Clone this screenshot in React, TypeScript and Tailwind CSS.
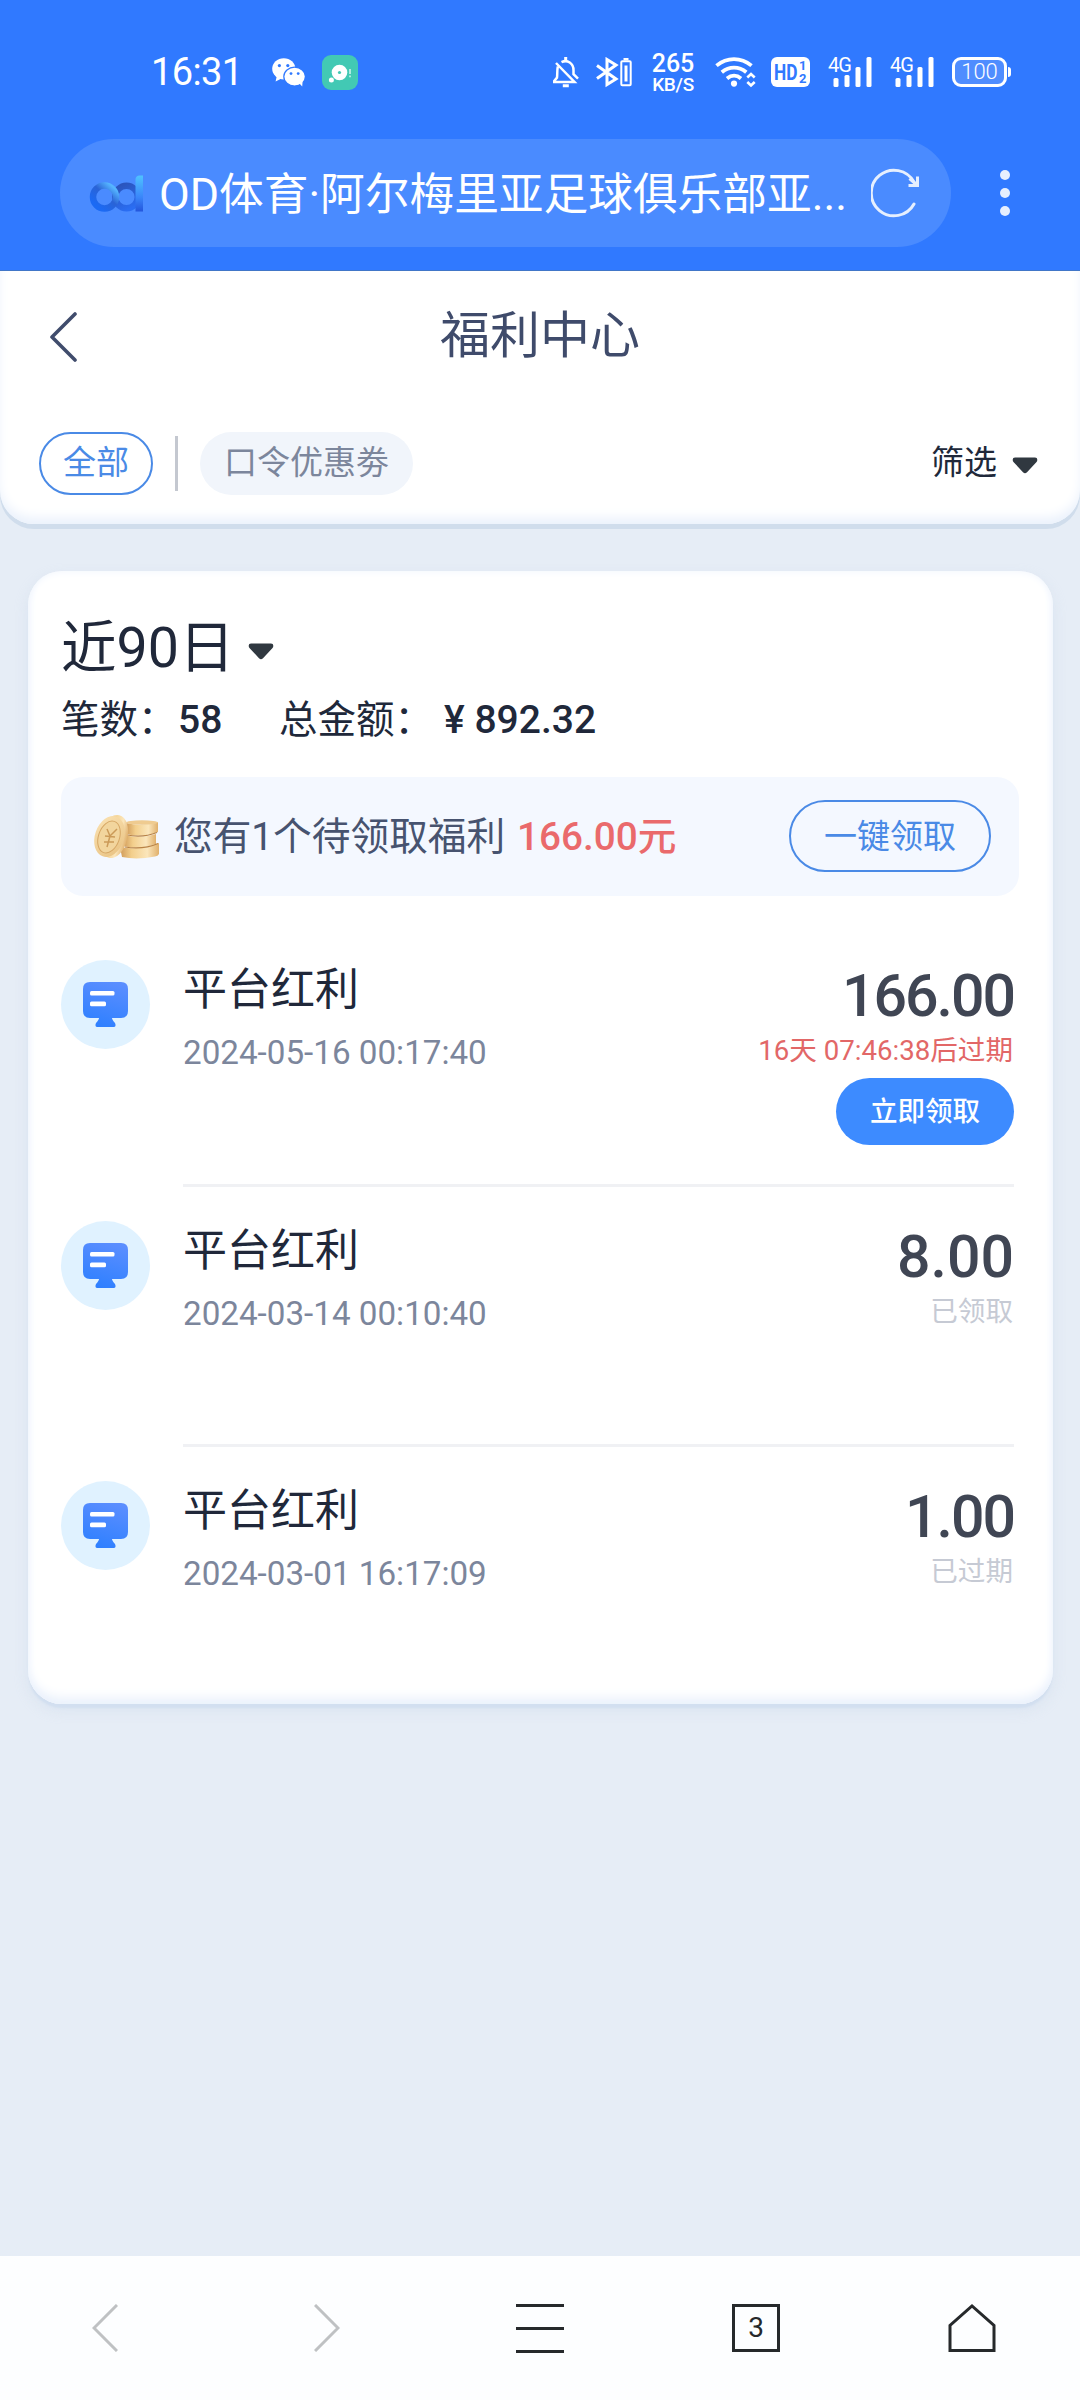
import React from "react";

function StatusBar() {
  return (
    <div className="flex h-[139px] items-start pl-[151px] pt-[53px] text-white">
      <div className="flex h-[38px] w-[121px] items-center whitespace-nowrap text-[38px] font-normal leading-none tracking-[-0.6px]">
        16:31
      </div>
      <svg className="mt-[5px] h-[29px] w-[33px]" viewBox="0 0 33 29" fill="#fff">
        <ellipse cx="11.8" cy="10.8" rx="11.6" ry="10.6" />
        <path d="M5 17 3.6 23.4 10.5 20Z" />
        <ellipse cx="22.6" cy="18.6" rx="10.8" ry="9.4" stroke="#3079ff" strokeWidth="1.2" />
        <path d="M27 25 30.2 28.4 30.6 23Z" />
        <g fill="#3079ff">
          <circle cx="7.4" cy="7.6" r="1.6" />
          <circle cx="15.8" cy="7.6" r="1.6" />
          <circle cx="19" cy="15.6" r="1.4" />
          <circle cx="26.2" cy="15.6" r="1.4" />
        </g>
      </svg>
      <svg className="ml-[17px] mt-[2px] h-[35px] w-[36px]" viewBox="0 0 36 35">
        <rect width="36" height="35" rx="9" fill="#42c9b4" />
        <circle cx="17.5" cy="17.5" r="7.8" fill="#fff" />
        <circle cx="17.5" cy="17.5" r="1.6" fill="#42c9b4" />
        <circle cx="9.4" cy="25" r="2.5" fill="#fff" />
        <path d="M28 14v5M28 20.6v1.6" stroke="#d5f4ee" strokeWidth="1.5" />
      </svg>
      <svg className="ml-[195px] mt-[4px] h-[31px] w-[26px]" viewBox="0 0 26 31" fill="none" stroke="#fff" strokeWidth="2.5">
        <path d="M8.500 5.200c6-3 12 1 12 8v4l4.500 4.500M4.800 9.600c-.8 4-.4 8.600-.8 11L1.200 24v.9h20.300L3 6" />
        <path d="M12.700 0v4M9.800 28.800h6" strokeWidth="3" />
      </svg>
      <svg className="ml-[17px] mt-[4px] h-[31px] w-[36px]" viewBox="0 0 36 31" fill="none" stroke="#fff" strokeWidth="3">
        <path d="M1 8.500 20 22 11 27.500V2.500l9 5.500L1 21.500" />
        <rect x="25.300" y="4.200" width="9.400" height="24" rx="1" strokeWidth="2" />
        <path d="M30 8.500v16" strokeWidth="3" />
        <path d="M27.500 2.200h5" strokeWidth="2.400" />
      </svg>
      <div className="ml-[19px] mt-[1px] flex w-[44px] flex-col items-center gap-[4px] whitespace-nowrap font-medium">
        <span className="h-[19px] text-[25px] leading-[19px]">265</span>
        <span className="h-[15px] text-[19px] leading-[15px] tracking-[-0.300px]">KB/S</span>
      </div>
      <svg className="ml-[20px] mt-[4px] h-[31px] w-[41px]" viewBox="0 0 41 31" fill="none" stroke="#fff" strokeWidth="3.800">
        <path d="M1.500 8.600c10.500-8.600 24.500-8.600 35 0M6.800 15.200c7.500-6.200 17-6.200 24.500 0M12 21.500c4.400-3.700 9.700-3.700 14 0" />
        <circle cx="19" cy="26.600" r="3.100" fill="#fff" stroke="none" />
        <path d="m32.300 20.500 3.700-3.500 3.700 3.500M32.300 25l3.700 3.500 3.700-3.500" strokeWidth="2.600" />
      </svg>
      <div className="ml-[15px] mt-[4px] flex h-[30px] w-[39px] justify-center rounded-[6px] bg-white pt-[3px] font-bold text-[#3079ff]">
        <svg className="h-[24px] w-[33px]" viewBox="0 0 33 24" fill="#3079ff">
          <text x="0" y="20" fontSize="22" textLength="23.500" lengthAdjust="spacingAndGlyphs">HD</text>
          <text x="25" y="10" fontSize="13">1</text>
          <text x="25" y="23" fontSize="13">2</text>
        </svg>
      </div>
      <Signal />
      <Signal />
      <div className="relative ml-[18px] mt-[4px] flex h-[30px] w-[55px] items-center justify-center rounded-[9px] border-[3px] border-white bg-[#4f8dff] text-[22px] font-light">
        <span className="leading-[24px]">100</span>
        <span className="absolute right-[-7px] top-[7px] h-[10px] w-[3px] rounded-r bg-white" />
      </div>
    </div>
  );
}

function Signal() {
  return (
    <div className="relative ml-[17px] mt-[4px] h-[30px] w-[45px]">
      <span className="absolute left-[1px] top-[0px] text-[20px] leading-[17px] tracking-[-1px]">4G</span>
      <svg className="h-[30px] w-[45px]" viewBox="0 0 45 30" fill="#fff">
        <rect x="6.500" y="21" width="5" height="9" rx="1.500" />
        <rect x="17.500" y="18" width="5" height="12" rx="1.500" />
        <rect x="28.500" y="10" width="5" height="20" rx="1.500" />
        <rect x="39.500" y="0" width="5" height="30" rx="1.500" />
      </svg>
    </div>
  );
}

function AddressBar() {
  return (
    <div className="flex items-center pl-[60px]">
      <div className="flex h-[108px] w-[891px] items-center rounded-full bg-[#4a8bff] pl-[29px]">
        <svg className="h-[37px] w-[54px] shrink-0" viewBox="0 0 54 37" fill="none">
          <defs>
            <linearGradient id="ringA" x1="0.900" y1="0.100" x2="0.200" y2="0.900">
              <stop offset="0" stopColor="#55b4ff" />
              <stop offset="0.450" stopColor="#2a63d6" />
              <stop offset="1" stopColor="#1b6af4" />
            </linearGradient>
            <linearGradient id="ringB" x1="0.200" y1="0" x2="0.700" y2="1">
              <stop offset="0" stopColor="#2b55bd" />
              <stop offset="1" stopColor="#2a6df2" />
            </linearGradient>
            <linearGradient id="stem" x1="0" y1="0" x2="0" y2="1">
              <stop offset="0" stopColor="#4fc3ff" />
              <stop offset="0.600" stopColor="#3a86fa" />
              <stop offset="1" stopColor="#2355dc" />
            </linearGradient>
          </defs>
          <circle cx="37.500" cy="22" r="11.300" stroke="url(#ringB)" strokeWidth="6.500" />
          <path d="M46.500 4q.5-3.500 4-3.500H54V36.500h-7.500Z" fill="url(#stem)" />
          <circle cx="15.500" cy="22" r="11.500" stroke="url(#ringA)" strokeWidth="6.500" />
        </svg>
        <div className="ml-[16px] mt-[4px] w-[691px] shrink-0 whitespace-nowrap text-[44.700px] leading-[60px] text-white">
          OD体育·阿尔梅里亚足球俱乐部亚...
        </div>
        <svg className="ml-[21px] h-[50px] w-[50px] shrink-0" viewBox="0 0 50 50" fill="none" stroke="#e6effe" strokeWidth="3">
          <path d="M43 36A22.800 22.800 0 1 1 43 14" strokeLinecap="round" />
          <path d="M46.500 8.500v9H37.500M38.500 10.500l8 7" strokeWidth="3" />
        </svg>
      </div>
      <div className="ml-[49px] flex flex-col gap-[8px]">
        <span className="size-[10px] rounded-full bg-[#e6effe]" />
        <span className="size-[10px] rounded-full bg-[#e6effe]" />
        <span className="size-[10px] rounded-full bg-[#e6effe]" />
      </div>
    </div>
  );
}

function Caret() {
  return (
    <svg className="h-[17px] w-[26px]" viewBox="0 0 26 17" fill="#303840">
      <path d="M3 0.500h20q2.500 0 2.300 2.500 0 1.200-1 2.200L15 15.300q-2 2-4 0L1.700 5.200q-1-1-1-2.200Q.5.5 3 .5Z" />
    </svg>
  );
}

function PageHeader() {
  return (
    <div className="h-[253px] rounded-b-[34px] bg-white shadow-[0_5px_0_#d0ddec,inset_0_-8px_12px_-2px_#eaf1fc]">
      <div className="flex h-[131px] items-center pl-[49px]">
        <svg className="h-[50px] w-[30px]" viewBox="0 0 30 50" fill="none" stroke="#404c6c" strokeWidth="3.600" strokeLinecap="round" strokeLinejoin="round">
          <path d="M26 2 3 25 26 48" />
        </svg>
        <h1 className="mb-[2px] ml-[361px] whitespace-nowrap text-[50px] leading-[60px] text-[#3f4b6b]">福利中心</h1>
      </div>
      <div className="mt-[30px] flex h-[63px] items-center pl-[39px]">
        <div className="flex h-[63px] w-[114px] items-center justify-center rounded-full border-2 border-[#4a8ae6] pb-[3px] text-[33px] leading-none text-[#4a8ae6]">
          全部
        </div>
        <div className="ml-[22px] h-[55px] w-[3px] bg-[#c4c8d0]" />
        <div className="ml-[22px] flex h-[63px] w-[213px] items-center justify-center rounded-full bg-[#f1f5fb] pb-[3px] text-[33px] leading-none text-[#7c869c]">
          口令优惠劵
        </div>
        <div className="ml-[518px] pb-[3px] text-[33px] leading-none text-[#20283a]">筛选</div>
        <div className="ml-[15px] mt-[4px] flex"><Caret /></div>
      </div>
    </div>
  );
}

function Coins() {
  return (
    <svg className="h-[45px] w-[67px]" viewBox="0 0 67 45">
      <defs>
        <linearGradient id="gold" x1="0" x2="1">
          <stop offset="0" stopColor="#d09a58" />
          <stop offset="0.300" stopColor="#f3cf8c" />
          <stop offset="0.700" stopColor="#fbe6bb" />
          <stop offset="1" stopColor="#e0b06c" />
        </linearGradient>
        <linearGradient id="face" x1="0" y1="0" x2="1" y2="1">
          <stop offset="0" stopColor="#fbe3b4" />
          <stop offset="1" stopColor="#e8c180" />
        </linearGradient>
      </defs>
      <path d="M27 33q20 4 39-4v11q-1 2-4 2.500-18 3.500-33 .5Z" fill="url(#gold)" />
      <path d="M30 21q18 4 33-1v10q-17 6-33 2Z" fill="url(#gold)" />
      <path d="M33 9q16 4 32-1v10q-15 6-32 2Z" fill="url(#gold)" />
      <ellipse cx="49" cy="8.500" rx="16" ry="2.200" fill="#efcb90" />
      <path d="M34 21q16 3 30-2.500M32 33q18 3 33-3.500" stroke="#b98345" strokeWidth="1.200" fill="none" />
      <ellipse cx="21" cy="22.500" rx="13.500" ry="22" transform="rotate(14 21 22.500)" fill="url(#gold)" />
      <ellipse cx="16.500" cy="22.500" rx="14.500" ry="21" transform="rotate(19 16.500 22.500)" fill="url(#face)" />
      <ellipse cx="16" cy="23" rx="10.500" ry="16.500" transform="rotate(19 16 23)" fill="#f2d59d" stroke="#d6a765" strokeWidth="1" />
      <path d="m14 15 3 7 7-7M17 22l-3 11M12 22l10 1M11 28l10 0" stroke="#cb9a58" strokeWidth="1.500" fill="none" />
    </svg>
  );
}

function PlatformIcon() {
  return (
    <div className="flex size-[89px] shrink-0 items-center justify-center rounded-full bg-[#e0f2ff]">
      <svg className="h-[45px] w-[45px]" viewBox="0 0 45 45">
        <defs>
          <linearGradient id="screen" x1="0.700" y1="0" x2="0.400" y2="1">
            <stop offset="0" stopColor="#5b8eff" />
            <stop offset="1" stopColor="#2f80ff" />
          </linearGradient>
        </defs>
        <path d="M7 0h31q7 0 7 7v22q0 7-7 7h-9q0 1.500 3 5 1.500 3.500-1 4H14q-2.500-.5-1-4 3-3.500 3-5H7q-7 0-7-7V7q0-7 7-7Z" fill="url(#screen)" />
        <rect x="7" y="9" width="24.500" height="4.600" rx="1.500" fill="#fff" />
        <rect x="7" y="19.600" width="16" height="4.600" rx="1.500" fill="#fff" />
      </svg>
    </div>
  );
}

type Reward = { date: string; amount: string; tracking: string; note: string; claim?: boolean };

const rewards: Reward[] = [
  { date: "2024-05-16 00:17:40", amount: "166.00", tracking: "tracking-[-2px]", note: "16天 07:46:38后过期", claim: true },
  { date: "2024-03-14 00:10:40", amount: "8.00", tracking: "tracking-[0px]", note: "已领取" },
  { date: "2024-03-01 16:17:09", amount: "1.00", tracking: "tracking-[-2px]", note: "已过期" },
];

function RewardRow({ reward, last }: { reward: Reward; last: boolean }) {
  return (
    <div className="flex h-[260.500px] pl-[33px] pr-[39px]">
      <div className="pt-[34px]"><PlatformIcon /></div>
      <div className={`ml-[33px] flex flex-1 justify-between border-b-[3px] ${last ? "border-transparent" : "border-[#f0f1f4]"}`}>
        <div>
          <div className="mt-[37px] text-[44px] leading-[54px] text-[#20283a]">平台红利</div>
          <div className="mt-[16px] whitespace-nowrap text-[33.200px] leading-[40px] text-[#7c869c]">{reward.date}</div>
        </div>
        <div className="flex flex-col items-end">
          <div className={`${reward.tracking} mt-[40px] h-[60px] whitespace-nowrap text-[59px] font-medium leading-[60px] text-[#404654]`}>{reward.amount}</div>
          <div className={`mt-[8px] whitespace-nowrap pr-[1px] text-[27.600px] leading-[34px] ${reward.claim ? "text-[#e26767]" : "text-[#c6cad4]"}`}>{reward.note}</div>
          {reward.claim && (
            <button className="mt-[10px] flex h-[67px] w-[178px] items-center justify-center rounded-full bg-[#3d8bff] text-[27.500px] font-medium leading-none text-white">
              立即领取
            </button>
          )}
        </div>
      </div>
    </div>
  );
}

function RewardsCard() {
  return (
    <div className="ml-[28px] mt-[47px] h-[1133px] w-[1025px] rounded-[34px] bg-white shadow-[0_5px_2px_-1px_#d2dff0,0_6px_14px_0px_rgba(190,205,230,0.300),inset_0_-8px_12px_-2px_#eaf1fc,inset_0_0_8px_#f0f5fd]">
      <div className="flex items-center pl-[33px] pt-[48px]">
        <span className="whitespace-nowrap text-[55.500px] leading-[60px] text-[#20283a]">近90日</span>
        <span className="ml-[14px] mt-[4px] flex"><Caret /></span>
      </div>
      <div className="mt-[11px] flex items-center whitespace-nowrap pl-[33px] text-[38.500px] leading-[60px] text-[#20283a]">
        <span className="w-[117px]">笔数：</span>
        <span className="w-[101px] text-[39px] font-medium">58</span>
        <span className="w-[154px]">总金额：</span>
        <span className="ml-[11px] text-[39px] font-medium">¥ 892.32</span>
      </div>
      <div className="ml-[33px] mt-[27px] flex h-[119px] w-[958px] items-center rounded-[22px] bg-[#f4f8ff] pl-[32px]">
        <Coins />
        <span className="ml-[14px] w-[343px] whitespace-nowrap text-[38.700px] leading-[50px] text-[#47536f]">您有1个待领取福利</span>
        <span className="w-[272px] whitespace-nowrap text-[38.700px] font-medium leading-[50px] text-[#ea6a6c]">166.00元</span>
        <button className="mb-[1px] flex h-[72px] w-[202px] items-center justify-center rounded-full border-2 border-[#4a8ae6] text-[33px] leading-none text-[#4a8ae6]">
          一键领取
        </button>
      </div>
      <div className="mt-[30px]">
        {rewards.map((r, i) => (
          <RewardRow key={r.date} reward={r} last={i === rewards.length - 1} />
        ))}
      </div>
    </div>
  );
}

function BottomNav() {
  return (
    <div className="flex h-[144px] items-center bg-[#fdfeff] pl-[92px]">
      <svg className="h-[48px] w-[26px]" viewBox="0 0 26 48" fill="none" stroke="#bfc1c3" strokeWidth="3">
        <path d="M25 1 2 24 25 47" />
      </svg>
      <svg className="ml-[196px] h-[48px] w-[26px]" viewBox="0 0 26 48" fill="none" stroke="#bfc1c3" strokeWidth="3">
        <path d="M1 1 24 24 1 47" />
      </svg>
      <div className="ml-[176px] flex h-[49px] w-[48px] flex-col justify-between">
        <span className="h-[3px] bg-[#26292b]" />
        <span className="h-[3px] bg-[#26292b]" />
        <span className="h-[3px] bg-[#26292b]" />
      </div>
      <div className="ml-[168px] flex size-[48px] items-center justify-center border-[3px] border-[#26292b] text-[28px] leading-none text-[#26292b]">
        3
      </div>
      <svg className="ml-[168px] h-[50px] w-[48px]" viewBox="0 0 48 50" fill="none" stroke="#26292b" strokeWidth="3">
        <path d="M2 47.500V22.500L24 3l22 19.500v25Z" />
      </svg>
    </div>
  );
}

export default function App() {
  return (
    <div className="flex h-[2400px] w-[1080px] flex-col overflow-hidden bg-[#e6edf6] font-['Roboto','Noto_Sans_CJK_SC',sans-serif]">
      <header className="h-[271px] shrink-0 border-b border-[#4176c8] bg-[#3079ff]">
        <StatusBar />
        <AddressBar />
      </header>
      <main className="flex-1">
        <PageHeader />
        <RewardsCard />
      </main>
      <BottomNav />
    </div>
  );
}
